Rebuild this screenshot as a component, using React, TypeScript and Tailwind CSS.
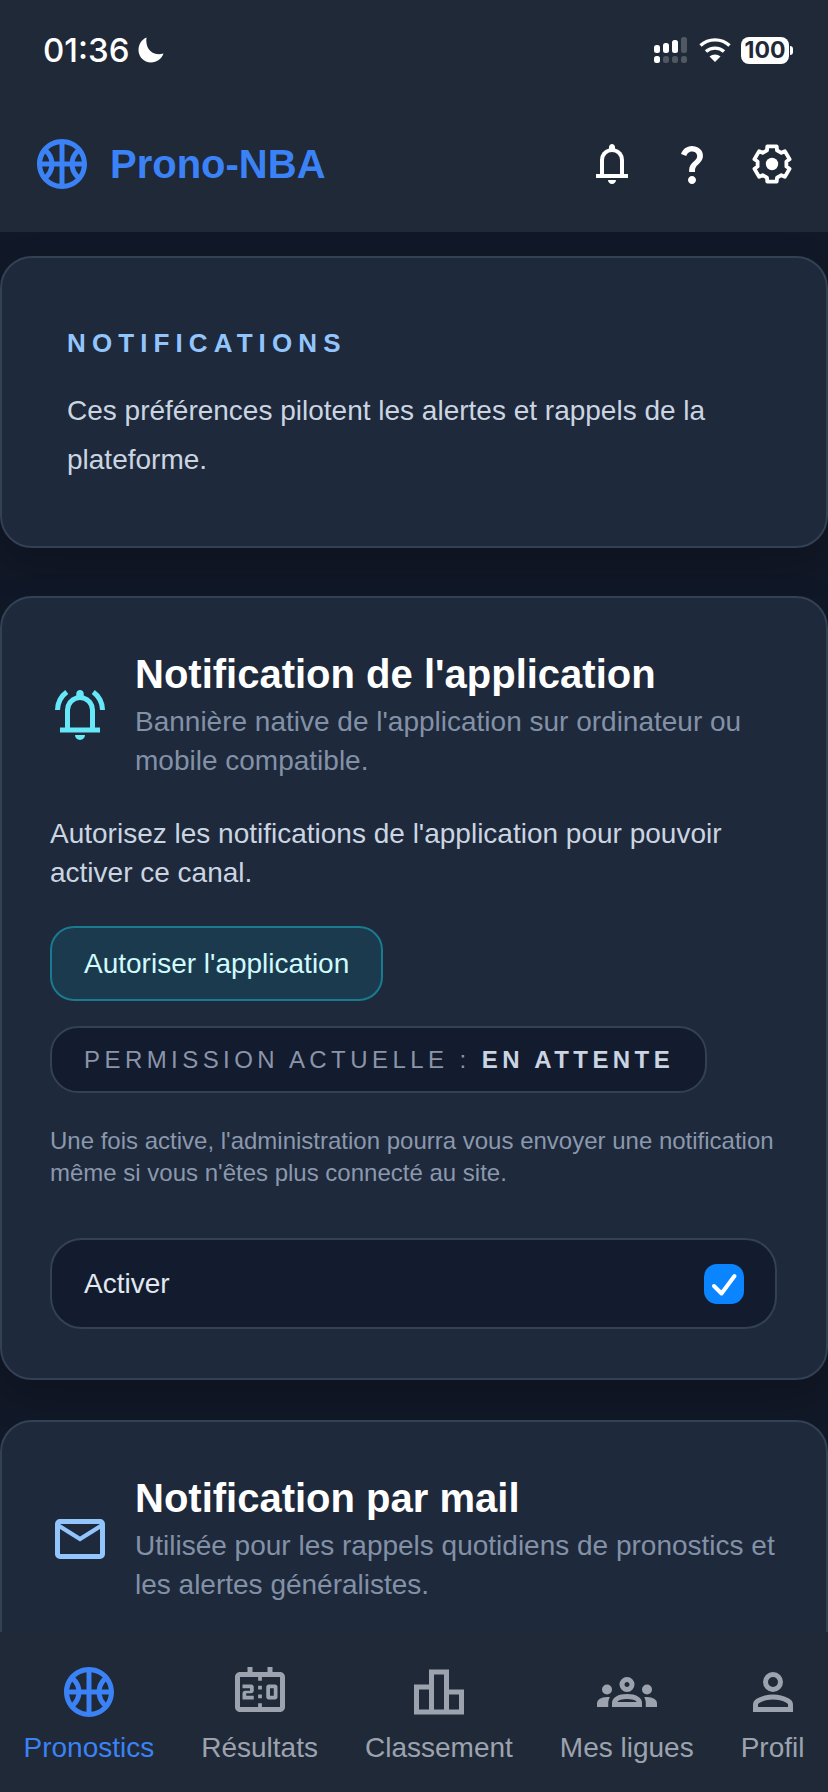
import React from "react";
import { MdOutlineSportsBasketball, MdQuestionMark, MdOutlineScoreboard } from "react-icons/md";

const BELL =
  "M4 19v-2h2v-7q0-2.075 1.250-3.688T10.500 4.200v-.7q0-.625.438-1.062T12 2q.625 0 1.063.438T13.500 3.500v.7q2 .5 3.250 2.112T18 10v7h2v2H4Zm8 3q-.825 0-1.412-.587T10 20h4q0 .825-.587 1.413T12 22Zm-4-5h8v-7q0-1.650-1.175-2.825T12 6q-1.650 0-2.825 1.175T8 10v7Z";
const BELL_WAVES =
  "M2 10q0-2.500 1.112-4.588T6.100 2L7.300 3.600q-1.500 1.100-2.400 2.762T4 10H2Zm18 0q0-2-.9-3.638T16.700 3.600L17.900 2q1.875 1.325 2.988 3.412T22 10h-2Z";
const MAIL =
  "M4 20q-.825 0-1.412-.587T2 18V6q0-.825.588-1.412T4 4h16q.825 0 1.413.588T22 6v12q0 .825-.587 1.413T20 20H4Zm8-7L4 8v10h16V8l-8 5Zm0-2l8-5H4l8 5Z";
const LEADERBOARD = "M4 19h4v-8H4v8Zm6 0h4V5h-4v14Zm6 0h4v-6h-4v6ZM2 21V9h6V3h8v8h6v10H2Z";
const GROUPS =
  "M0 18v-1.575q0-1.075 1.100-1.750T4 14q.325 0 .625.012t.575.063q-.350.525-.525 1.100T4.500 16.375V18H0Zm6 0v-1.625q0-.8.438-1.462T7.675 13.750q.8-.5 1.913-.75T12 12.750q1.325 0 2.438.25t1.912.75q.8.5 1.225 1.162T18 16.375V18H6Zm13.500 0v-1.625q0-.65-.162-1.225t-.488-1.075q.275-.05.563-.063T20 14q1.800 0 2.900.662T24 16.425V18h-4.500ZM8.125 16H15.900q-.25-.5-1.387-.875T12 14.750q-1.375 0-2.513.375T8.125 16ZM4 13q-.825 0-1.412-.587T2 11q0-.85.588-1.425T4 9q.85 0 1.425.575T6 11q0 .825-.575 1.413T4 13Zm16 0q-.825 0-1.412-.587T18 11q0-.85.588-1.425T20 9q.85 0 1.425.575T22 11q0 .825-.575 1.413T20 13Zm-8-1q-1.250 0-2.125-.875T9 9q0-1.275.875-2.137T12 6q1.275 0 2.138.863T15 9q0 1.250-.863 2.125T12 12Zm0-2q.425 0 .713-.288T13 9q0-.425-.288-.712T12 8q-.425 0-.712.288T11 9q0 .425.288.713T12 10Z";
const PERSON =
  "M12 12q-1.650 0-2.825-1.175T8 8q0-1.650 1.175-2.825T12 4q1.650 0 2.825 1.175T16 8q0 1.650-1.175 2.825T12 12ZM4 20v-2.800q0-.85.438-1.562T5.600 14.550q1.550-.775 3.150-1.163T12 13q1.650 0 3.250.387t3.150 1.163q.725.375 1.163 1.088T20 17.200V20H4Zm2-2h12v-.8q0-.275-.138-.5t-.362-.35q-1.350-.675-2.725-1.012T12 15q-1.400 0-2.775.338T6.500 16.350q-.225.125-.363.35T6 17.200v.8Zm6-8q.825 0 1.413-.588T14 8q0-.825-.587-1.412T12 6q-.825 0-1.412.588T10 8q0 .825.588 1.412T12 10Z";

function Glyph({ d, size, className }: { d: string | string[]; size: number; className?: string }) {
  const paths = Array.isArray(d) ? d : [d];
  return (
    <svg width={size} height={size} viewBox="0 0 24 24" fill="currentColor" className={className}>
      {paths.map((p) => (
        <path key={p} d={p} />
      ))}
    </svg>
  );
}

function SignalIcon() {
  return (
    <svg width="33" height="26" viewBox="0 0 33 26" fill="#fff">
      <rect x="0" y="8" width="6" height="8" rx="2.500" />
      <rect x="9" y="6" width="6" height="10" rx="2.500" />
      <rect x="18" y="3" width="6" height="13" rx="2.500" />
      <rect x="27" y="0" width="6" height="16" rx="2.500" fillOpacity="0.22" />
      <rect x="0" y="19" width="6" height="7" rx="2.500" />
      <rect x="9" y="19" width="6" height="7" rx="2.500" fillOpacity="0.22" />
      <rect x="18" y="19" width="6" height="7" rx="2.500" fillOpacity="0.22" />
      <rect x="27" y="19" width="6" height="7" rx="2.500" fillOpacity="0.22" />
    </svg>
  );
}

function WifiIcon() {
  return (
    <svg width="32" height="24" viewBox="0 0 32 24" fill="none" stroke="#fff" strokeWidth="3.400">
      <path d="M1.500 7.500C9.500 0 22.500 0 30.500 7.500" />
      <path d="M7 13.500C11.800 9 20.200 9 25 13.500" />
      <path d="M16 24L10.500 18.500C13.500 15.800 18.500 15.800 21.500 18.500Z" fill="#fff" stroke="none" />
    </svg>
  );
}

function MoonIcon() {
  return (
    <svg width="26" height="26" viewBox="0 0 26 26" fill="#fff">
      <path d="M8.500 0.500C7 10 13 20 25.500 16.500C23.500 22 18.800 25.500 13 25.500C5.800 25.500 0.500 19.800 0.500 13C0.500 7.300 3.800 2.400 8.500 0.500Z" />
    </svg>
  );
}

function GearIcon() {
  const cx = 12;
  const cy = 12;
  const R = 9.1;
  const r = 7.3;
  const pts: string[] = [];
  const rad = (d: number) => (d * Math.PI) / 180;
  for (let i = 0; i < 6; i++) {
    const a = -90 + i * 60;
    const add = (d: number, rr: number) =>
      pts.push(`${(cx + rr * Math.cos(rad(a + d))).toFixed(2)},${(cy + rr * Math.sin(rad(a + d))).toFixed(2)}`);
    add(-15, R);
    add(15, R);
    add(20, r);
    add(40, r);
  }
  return (
    <svg width="48" height="48" viewBox="0 0 24 24">
      <polygon points={pts.join(" ")} fill="none" stroke="#fff" strokeWidth="1.900" strokeLinejoin="round" />
      <circle cx="12" cy="12" r="3.100" fill="#fff" />
    </svg>
  );
}

function CardHead({ icon, title, sub }: { icon: React.ReactNode; title: string; sub: React.ReactNode }) {
  return (
    <div className="flex items-center gap-[25px]">
      <div className="w-[60px] shrink-0">{icon}</div>
      <div>
        <h2 className="text-[40px] leading-[48px] font-bold text-white">{title}</h2>
        <p className="mt-[4px] text-[28px] leading-[39px] text-[#8391a7]">{sub}</p>
      </div>
    </div>
  );
}

function NavItem({ icon, label, active }: { icon: React.ReactNode; label: string; active?: boolean }) {
  return (
    <div className={`flex flex-col items-center ${active ? "text-[#3b82f6]" : "text-[#9ca3af]"}`}>
      {icon}
      <span className="mt-[10px] text-[28px] leading-[32px]">{label}</span>
    </div>
  );
}

export default function App() {
  return (
    <div
      className="flex h-[1792px] w-[828px] flex-col overflow-hidden bg-[#111827] text-white"
      style={{ fontFamily: '"Liberation Sans", Arial, sans-serif' }}
    >
      <header className="h-[232px] shrink-0 bg-[#1f2937]">
        <div className="flex h-[100px] items-center justify-between pl-[43px] pr-[35px]">
          <div className="flex items-center gap-[9px]">
            <span className="font-['Inter'] text-[33px] leading-none font-medium">01:36</span>
            <MoonIcon />
          </div>
          <div className="flex items-center">
            <SignalIcon />
            <span className="ml-[12px]">
              <WifiIcon />
            </span>
            <div className="ml-[10px] flex items-center">
              <span className="flex h-[27px] w-[48px] items-center justify-center rounded-[8px] bg-white font-['Inter'] text-[23px] leading-none font-bold text-[#1f2937]">
                100
              </span>
              <span className="ml-[1px] h-[9px] w-[3px] rounded-r-full bg-white" />
            </div>
          </div>
        </div>
        <div className="flex h-[128px] items-center justify-between px-[32px]">
          <div className="flex items-center gap-[18px] text-[#3b82f6]">
            <MdOutlineSportsBasketball size={60} />
            <span className="text-[40px] leading-none font-bold">Prono-NBA</span>
          </div>
          <div className="flex items-center gap-[32px] text-white">
            <Glyph d={BELL} size={48} />
            <MdQuestionMark size={48} />
            <GearIcon />
          </div>
        </div>
      </header>

      <main className="min-h-0 flex-1 overflow-hidden pt-[24px]">
        <section className="h-[292px] rounded-[32px] border-2 border-[#334155] bg-[#1e293b] pt-[69px] pl-[65px] shadow-[0_16px_40px_rgba(0,0,0,0.2)]">
          <h3 className="text-[26px] leading-[32px] font-bold tracking-[6.100px] text-[#93c5fd]">NOTIFICATIONS</h3>
          <p className="mt-[27px] w-[680px] text-[28px] leading-[49px] text-[#cbd5e1]">
            Ces préférences pilotent les alertes et rappels de la plateforme.
          </p>
        </section>

        <section className="mt-[48px] h-[784px] rounded-[32px] border-2 border-[#334155] bg-[#1e293b] pt-[52px] pl-[48px] pr-[48px] shadow-[0_16px_40px_rgba(0,0,0,0.2)]">
          <CardHead
            icon={<Glyph d={[BELL, BELL_WAVES]} size={60} className="text-[#67e8f9]" />}
            title="Notification de l'application"
            sub="Bannière native de l'application sur ordinateur ou mobile compatible."
          />
          <p className="mt-[34px] text-[28px] leading-[39px] text-[#cbd5e1]">
            Autorisez les notifications de l'application pour pouvoir activer ce canal.
          </p>
          <button className="mt-[34px] block h-[75px] rounded-[24px] border-2 border-[#1a7a90] bg-[#1c3a4d] px-[32px] text-[28px] text-[#cffafe]">
            Autoriser l'application
          </button>
          <div className="mt-[25px] flex h-[67px] w-[657px] items-center rounded-[28px] border-2 border-[#334155] bg-[#131b2e] pl-[32px] text-[24px] tracking-[0.185em] text-[#8b95a9]">
            <span>
              PERMISSION ACTUELLE : <strong className="font-bold text-[#cbd5e1]">EN ATTENTE</strong>
            </span>
          </div>
          <p className="mt-[32px] text-[24px] leading-[32px] text-[#8b98ad]">
            Une fois active, l'administration pourra vous envoyer une notification même si vous n'êtes plus connecté au site.
          </p>
          <div className="mt-[49px] flex h-[91px] w-[727px] items-center justify-between rounded-[32px] border-2 border-[#334155] bg-[#131c2f] pl-[32px] pr-[31px]">
            <span className="text-[28px] text-[#e2e8f0]">Activer</span>
            <span className="flex h-[40px] w-[40px] items-center justify-center rounded-[13px] bg-[#0a84ff]">
              <svg width="40" height="40" viewBox="0 0 40 40" fill="none" stroke="#fff" strokeWidth="4" strokeLinecap="round" strokeLinejoin="round">
                <path d="M10 22L17.500 29.500L30.500 12" />
              </svg>
            </span>
          </div>
        </section>

        <section className="mt-[40px] h-[400px] rounded-[32px] border-2 border-[#334155] bg-[#1e293b] pt-[52px] pl-[48px] pr-[48px]">
          <CardHead
            icon={<Glyph d={MAIL} size={60} className="text-[#93c5fd]" />}
            title="Notification par mail"
            sub="Utilisée pour les rappels quotidiens de pronostics et les alertes généralistes."
          />
        </section>
      </main>

      <nav className="flex h-[160px] shrink-0 items-start justify-around bg-[#1f2937] pt-[30px]">
        <NavItem active icon={<MdOutlineSportsBasketball size={60} />} label="Pronostics" />
        <NavItem icon={<MdOutlineScoreboard size={60} />} label="Résultats" />
        <NavItem icon={<Glyph d={LEADERBOARD} size={60} />} label="Classement" />
        <NavItem icon={<Glyph d={GROUPS} size={60} />} label="Mes ligues" />
        <NavItem icon={<Glyph d={PERSON} size={60} />} label="Profil" />
      </nav>
    </div>
  );
}
